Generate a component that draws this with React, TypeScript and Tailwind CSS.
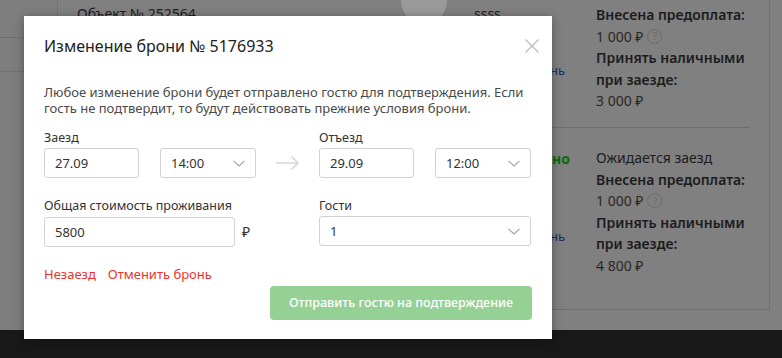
import React from 'react';

function Chevron() {
  return (
    <svg width="12" height="7" viewBox="0 0 12 7" fill="none" stroke="#a3a3a3" strokeWidth="1.1">
      <polyline points="0.5 0.8 6 6 11.5 0.8" />
    </svg>
  );
}

function Field({ value, className }: { value: string; className: string }) {
  return (
    <div className={`flex h-[30px] items-center rounded-[3px] border border-[#d2d2d2] pl-[10px] text-[13px] text-[#333] ${className}`}>
      {value}
    </div>
  );
}

function SelectBox({ value, className }: { value: string; className: string }) {
  return (
    <div className={`flex h-[30px] items-center justify-between rounded-[3px] border border-[#d2d2d2] pl-[10px] pr-[10px] text-[13px] text-[#333] ${className}`}>
      <span>{value}</span>
      <Chevron />
    </div>
  );
}

function Hint() {
  return (
    <span className="ml-[4px] inline-flex h-[15px] w-[15px] items-center justify-center rounded-full border border-[#6c6c6c] text-[10px] leading-none text-[#6c6c6c]">
      ?
    </span>
  );
}

// Payment summary column behind the overlay
function Payment({ status, left }: { status?: string; left: string }) {
  return (
    <div className="whitespace-nowrap text-[14px] leading-[21.6px] text-[#1c1c1c]">
      {status && <div>{status}</div>}
      <div className="font-semibold">Внесена предоплата:</div>
      <div className="flex items-center text-[#2b2823]">
        1 000 ₽<Hint />
      </div>
      <div className="font-semibold">Принять наличными</div>
      <div className="font-semibold">при заезде:</div>
      <div className="text-[#2b2823]">{left}</div>
    </div>
  );
}

export default function App() {
  return (
    <div className="relative h-[358px] w-[782px] overflow-hidden bg-[#808080] font-['Noto_Sans',sans-serif]">
      {/* page under the overlay */}
      <div className="flex h-[330px]">
        <aside className="w-[58px] border-r border-[#747474] bg-[#7e7e7e]">
          <div className="h-[38px] border-b border-[#717171]" />
          <div className="h-[34px] border-b border-[#717171]" />
        </aside>
        <div className="w-[712px] self-start border-r border-b border-[#6f6f6f]">
          <div className="flex h-[127px]">
            <div className="w-[337px] pl-[19px] pt-[3px] text-[14px] text-[#1e1e1e]">Объект № 252564</div>
            <div className="w-[79px]">
              <div className="-mt-[22px] ml-[6px] h-[46px] w-[46px] rounded-full bg-[#9a9a9a]" />
            </div>
            <div className="w-[122px] whitespace-nowrap">
              <div className="pt-[3px] text-[14px] text-[#1e1e1e]">ssss</div>
              <div className="-ml-[40px] mt-[37px] pr-[31px] text-right text-[13px] text-[#1f2f5c]">Отменить бронь</div>
            </div>
            <div className="pt-[4px]">
              <Payment left="3 000 ₽" />
            </div>
          </div>
          <div className="ml-[19px] mr-[19px] border-t border-[#6f6f6f]" />
          <div className="flex h-[181px]">
            <div className="w-[416px]" />
            <div className="w-[122px] whitespace-nowrap pt-[20px]">
              <div className="-ml-[40px] pr-[26px] text-right text-[14px] font-bold text-[#0b6a0b]">Оплачено</div>
              <div className="-ml-[40px] mt-[58px] pr-[31px] text-right text-[13px] text-[#1f2f5c]">Отменить бронь</div>
            </div>
            <div className="pt-[19px]">
              <Payment status="Ожидается заезд" left="4 800 ₽" />
            </div>
          </div>
        </div>
      </div>
      <div className="h-[28px] bg-[#191919]" />

      {/* modal */}
      <div className="absolute left-[24px] top-[16px] h-[323px] w-[528px] bg-white px-[20px] pt-[18px] shadow-[0_2px_10px_rgba(0,0,0,0.35)]">
        <div className="flex items-start justify-between">
          <h2 className="text-[16px] leading-[24px] text-[#222]">Изменение брони № 5176933</h2>
          <button className="-mr-[7px] mt-[5px]">
            <svg width="14" height="14" viewBox="0 0 14 14" stroke="#bdbdbd" strokeWidth="1.2">
              <line x1="0.5" y1="0.5" x2="13.5" y2="13.5" />
              <line x1="13.5" y1="0.5" x2="0.5" y2="13.5" />
            </svg>
          </button>
        </div>

        <p className="mt-[26px] text-[13px] leading-[16px] text-[#4a4a4a]">
          Любое изменение брони будет отправлено гостю для подтверждения. Если гость не подтвердит, то будут действовать прежние условия брони.
        </p>

        <div className="mt-[14px] grid grid-cols-[212px_63px_212px] text-[12.5px] leading-[16px] text-[#333]">
          <div>
            <div className="mb-[2px]">Заезд</div>
            <div className="flex gap-[21px]">
              <Field value="27.09" className="w-[95px]" />
              <SelectBox value="14:00" className="w-[96px]" />
            </div>
          </div>
          <div className="flex items-end justify-center pb-[8px]">
            <svg width="23" height="14" viewBox="0 0 23 14" fill="none" stroke="#cfcfcf" strokeWidth="1.3">
              <line x1="0" y1="7" x2="22" y2="7" />
              <polyline points="15.5 0.5 22 7 15.5 13.5" />
            </svg>
          </div>
          <div>
            <div className="mb-[2px]">Отъезд</div>
            <div className="flex gap-[21px]">
              <Field value="29.09" className="w-[95px]" />
              <SelectBox value="12:00" className="w-[96px]" />
            </div>
          </div>

          <div className="mt-[20px]">
            <div className="mb-[3px]">Общая стоимость проживания</div>
            <div className="flex items-center gap-[7px]">
              <Field value="5800" className="w-[191px]" />
              <span className="text-[14px] text-[#333]">₽</span>
            </div>
          </div>
          <div />
          <div className="mt-[20px]">
            <div className="mb-[2px]">Гости</div>
            <SelectBox value="1" className="w-[212px]" />
          </div>
        </div>

        <div className="mt-[18px] flex gap-[12px] text-[13px] leading-[18px] text-[#f0302c]">
          <span>Незаезд</span>
          <span>Отменить бронь</span>
        </div>

        <div className="mt-[3px] flex justify-end">
          <button className="h-[34px] w-[262px] rounded-[4px] bg-[#95d195] text-[12.5px] font-medium text-white">
            Отправить гостю на подтверждение
          </button>
        </div>
      </div>
    </div>
  );
}
